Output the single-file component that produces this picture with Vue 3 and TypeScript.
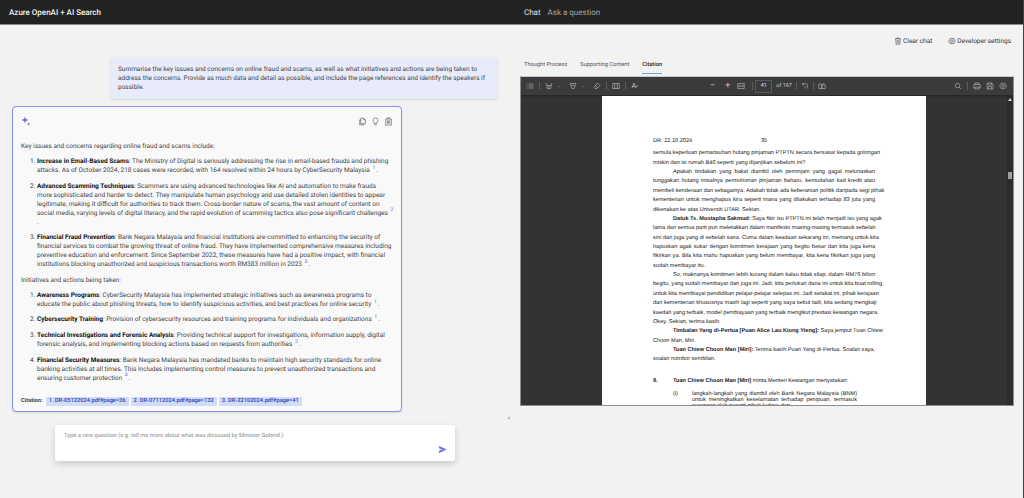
<template>
  <div class="page">
    <header class="topbar">
      <span class="brand">Azure OpenAI + AI Search</span>
      <nav class="topnav">
        <span class="on">Chat</span>
        <span>Ask a question</span>
      </nav>
    </header>

    <div class="commands">
      <span class="command">
        <svg viewBox="0 0 16 16" class="cmd-icon"><path d="M2 3.500h12M6 3.500V2h4v1.500M3.500 3.500l.8 11h7.400l.8-11M6.500 6v6.500M9.500 6v6.500" /></svg>
        Clear chat
      </span>
      <span class="command">
        <svg viewBox="0 0 16 16" class="cmd-icon"><circle cx="8" cy="8" r="2.500" /><path d="M8 1.500l1.500 1.800 2.300-.4.700 2.200 2 1.200-1 1.700 1 1.700-2 1.200-.7 2.200-2.300-.4L8 14.500l-1.500-1.800-2.300.4-.7-2.200-2-1.200 1-1.700-1-1.700 2-1.200.7-2.200 2.300.4z" /></svg>
        Developer settings
      </span>
    </div>

    <main class="split">
      <section class="chat">
        <div class="question">{{ question }}</div>

        <article class="answer">
          <div class="answer-head">
            <svg viewBox="0 0 20 20" class="sparkle">
              <path d="M8 1l1.800 5.200L15 8l-5.200 1.800L8 15l-1.800-5.200L1 8l5.200-1.800z" />
              <path d="M15.500 12.500l.9 2.600 2.600.9-2.600.9-.9 2.600-.9-2.600-2.600-.9 2.600-.9z" />
            </svg>
            <div class="answer-tools">
              <svg viewBox="0 0 16 16"><path d="M5 2h5l3 3v7H5zM10 2v3h3M5 5H3v9h7v-2" /></svg>
              <svg viewBox="0 0 16 16"><path d="M8 1.500a4.500 4.500 0 0 0-2.500 8.200V11.500h5V9.700A4.500 4.500 0 0 0 8 1.500zM6 14h4" /></svg>
              <svg viewBox="0 0 16 16"><path d="M3 3.500h10v11H3zM6 3.500V1.500h4v2M6 6v6M8 6v6M10 6v6" /></svg>
            </div>
          </div>

          <p class="para">Key issues and concerns regarding online fraud and scams include:</p>
          <ol class="points">
            <li v-for="item in issues" :key="item.title">
              <b>{{ item.title }}</b>{{ item.text }}<sup>{{ item.ref }}</sup>{{ item.tail }}
            </li>
          </ol>

          <p class="para second">Initiatives and actions being taken:</p>
          <ol class="points">
            <li v-for="item in initiatives" :key="item.title">
              <b>{{ item.title }}</b>{{ item.text }}<sup>{{ item.ref }}</sup>{{ item.tail }}
            </li>
          </ol>

          <div class="citations">
            <span class="cite-label">Citation:</span>
            <a v-for="c in citations" :key="c" class="chip">{{ c }}</a>
          </div>
        </article>

        <div class="ask">
          <span class="placeholder">Type a new question (e.g. tell me more about what was dicussed by Minister Gobind.)</span>
          <svg viewBox="0 0 16 16" class="send"><path d="M1 1.500L15.500 8 1 14.500l1.800-5.300L9 8 2.800 6.800z" /></svg>
        </div>
        <span class="grip"></span>
      </section>

      <section class="side">
        <div class="tabs">
          <span>Thought Process</span>
          <span>Supporting Content</span>
          <span class="tab-on">Citation</span>
        </div>

        <div class="viewer">
          <div class="toolbar">
            <div class="tool-group left">
              <svg viewBox="0 0 16 16"><path d="M5 4h10M5 8h10M5 12h10M1 4h2M1 8h2M1 12h2" /></svg>
              <i class="sep"></i>
              <svg viewBox="0 0 16 16"><path d="M2 2l3 11h6l3-11M4 7h8M8 7v6" /></svg>
              <em>⌄</em>
              <svg viewBox="0 0 16 16" class="gap"><path d="M2 3h12l-4 10H6zM5 7h6" /></svg>
              <em>⌄</em>
              <svg viewBox="0 0 16 16" class="gap"><path d="M9 2l5 5-6 6H4l-2-2zM5 7l5 5" /></svg>
              <i class="sep"></i>
              <svg viewBox="0 0 16 16"><path d="M1.500 3h13v10h-13zM5.500 3v10M10.500 3v10" /></svg>
              <i class="sep"></i>
              <span class="aa">A<small>ᴬ</small></span>
            </div>

            <div class="tool-group center">
              <span class="sym">−</span>
              <span class="sym">+</span>
              <svg viewBox="0 0 16 16"><path d="M1.500 3h13v10h-13zM4 8h8M4 6v4M12 6v4" /></svg>
              <i class="sep first"></i>
              <span class="page-box">41</span>
              <span class="of">of 167</span>
              <i class="sep"></i>
              <svg viewBox="0 0 16 16"><path d="M3 5a6 6 0 0 1 10.500 3 6 6 0 0 1-3 5M3 2v3h3M8 8v4" /></svg>
              <i class="sep"></i>
              <svg viewBox="0 0 16 16"><path d="M1.500 4h6v9h-6zM7.500 6h7v7h-7zM10 3h3" /></svg>
            </div>

            <div class="tool-group right">
              <svg viewBox="0 0 16 16"><circle cx="7" cy="7" r="4.500" /><path d="M10.500 10.500L14 14" /></svg>
              <i class="sep"></i>
              <svg viewBox="0 0 16 16"><path d="M4 5V2h8v3M4 12H1.500V5h13v7H12M4 10h8v4H4z" /></svg>
              <svg viewBox="0 0 16 16"><path d="M2 2h10l2 2v10H2zM5 2v4h6V2M5 14v-5h6v5" /></svg>
              <svg viewBox="0 0 16 16"><circle cx="8" cy="8" r="2.500" /><path d="M8 1.500l1.500 1.800 2.300-.4.700 2.200 2 1.200-1 1.700 1 1.700-2 1.200-.7 2.200-2.300-.4L8 14.500l-1.500-1.800-2.300.4-.7-2.200-2-1.200 1-1.700-1-1.700 2-1.200.7-2.200 2.300.4z" /></svg>
            </div>
          </div>

          <div class="viewer-body">
            <div class="pdf-page">
              <div class="pdf-head"><span>DR. 22.10.2024</span><span class="pdf-num">35</span></div>
              <p v-for="(l, i) in pdfLines" :key="i" class="pdf-line" :class="{ full: l.full, indent: l.indent }">
                <b v-if="l.bold">{{ l.bold }}</b> {{ l.text }}
              </p>
              <div class="pdf-item">
                <span class="pdf-no">9.</span>
                <span><b>Tuan Chiew Choon Man [Miri]</b> minta Menteri Kewangan menyatakan:</span>
              </div>
              <div class="pdf-sub">
                <span class="pdf-roman">(i)</span>
                <div>
                  <p class="pdf-line full">langkah-langkah yang diambil oleh Bank Negara Malaysia (BNM)</p>
                  <p class="pdf-line full">untuk meningkatkan keselamatan terhadap penipuan, termasuk</p>
                  <p class="pdf-line">serangan oleh peranti pihak ketiga; dan</p>
                </div>
              </div>
            </div>
            <div class="scroll">
              <span class="scroll-up"></span>
              <span class="scroll-thumb"></span>
            </div>
          </div>
        </div>
      </section>
    </main>
  </div>
</template>

<script setup lang="ts">
type Point = { title: string; text: string; ref: number; tail: string };
type PdfLine = { text: string; bold?: string; full?: boolean; indent?: boolean };

const question =
  "Summarise the key issues and concerns on online fraud and scams, as well as what initiatives and actions are being taken to\naddress the concerns. Provide as much data and detail as possible, and include the page references and identify the speakers if\npossible.";

const issues: Point[] = [
  {
    title: "Increase in Email-Based Scams",
    text: ": The Ministry of Digital is seriously addressing the rise in email-based frauds and phishing\nattacks. As of October 2024, 218 cases were recorded, with 164 resolved within 24 hours by CyberSecurity Malaysia ",
    ref: 1,
    tail: ".",
  },
  {
    title: "Advanced Scamming Techniques",
    text: ": Scammers are using advanced technologies like AI and automation to make frauds\nmore sophisticated and harder to detect. They manipulate human psychology and use detailed stolen identities to appear\nlegitimate, making it difficult for authorities to track them. Cross-border nature of scams, the vast amount of content on\nsocial media, varying levels of digital literacy, and the rapid evolution of scamming tactics also pose significant challenges ",
    ref: 2,
    tail: "\n.",
  },
  {
    title: "Financial Fraud Prevention",
    text: ": Bank Negara Malaysia and financial institutions are committed to enhancing the security of\nfinancial services to combat the growing threat of online fraud. They have implemented comprehensive measures including\npreventive education and enforcement. Since September 2022, these measures have had a positive impact, with financial\ninstitutions blocking unauthorized and suspicious transactions worth RM383 million in 2023 ",
    ref: 3,
    tail: ".",
  },
];

const initiatives: Point[] = [
  {
    title: "Awareness Programs",
    text: ": CyberSecurity Malaysia has implemented strategic initiatives such as awareness programs to\neducate the public about phishing threats, how to identify suspicious activities, and best practices for online security ",
    ref: 1,
    tail: ".",
  },
  {
    title: "Cybersecurity Training",
    text: ": Provision of cybersecurity resources and training programs for individuals and organizations ",
    ref: 1,
    tail: ".",
  },
  {
    title: "Technical Investigations and Forensic Analysis",
    text: ": Providing technical support for investigations, information supply, digital\nforensic analysis, and implementing blocking actions based on requests from authorities ",
    ref: 2,
    tail: ".",
  },
  {
    title: "Financial Security Measures",
    text: ": Bank Negara Malaysia has mandated banks to maintain high security standards for online\nbanking activities at all times. This includes implementing control measures to prevent unauthorized transactions and\nensuring customer protection ",
    ref: 3,
    tail: ".",
  },
];

const citations = ["1. DR-05122024.pdf#page=36", "2. DR-07112024.pdf#page=132", "3. DR-22102024.pdf#page=41"];

const pdfLines: PdfLine[] = [
  { text: "semula keperluan pemansuhan hutang pinjaman PTPTN secara bersasar kepada golongan", full: true },
  { text: "miskin dan isi rumah B40 seperti yang dijanjikan sebelum ini?" },
  { text: "Apakah tindakan yang bakal diambil oleh peminjam yang gagal melunaskan", full: true, indent: true },
  { text: "tunggakan hutang misalnya permohonan pinjaman baharu, kemudahan kad kredit atau", full: true },
  { text: "membeli kenderaan dan sebagainya. Adakah tidak ada keberanian politik daripada segi pihak", full: true },
  { text: "kementerian untuk menghapus kira seperti mana yang dilakukan terhadap 83 juta yang", full: true },
  { text: "dikenakan ke atas Universiti UTAR. Sekian." },
  { bold: "Datuk Ts. Mustapha Sakmud:", text: "Saya fikir isu PTPTN ini telah menjadi isu yang agak", full: true, indent: true },
  { text: "lama dan semua parti pun meletakkan dalam manifesto masing-masing termasuk sebelah", full: true },
  { text: "sini dan juga yang di sebelah sana. Cuma dalam keadaan sekarang ini, memang untuk kita", full: true },
  { text: "hapuskan agak sukar dengan komitmen kerajaan yang begitu besar dan kita juga kena", full: true },
  { text: "fikirkan ya. Bila kita mahu hapuskan yang belum membayar, kita kena fikirkan juga yang", full: true },
  { text: "sudah membayar itu." },
  { text: "So, maknanya komitmen lebih kurang dalam kalau tidak silap, dalam RM76 bilion", full: true, indent: true },
  { text: "begitu, yang sudah membayar dan juga ini. Jadi, kita perlukan dana ini untuk kita buat rolling,", full: true },
  { text: "untuk kita membiayai pendidikan pelajar-pelajar selepas ini. Jadi setakat ini, pihak kerajaan", full: true },
  { text: "dan kementerian khususnya masih lagi seperti yang saya sebut tadi, kita sedang mengkaji", full: true },
  { text: "kaedah yang terbaik, model pembiayaan yang terbaik mengikut prestasi kewangan negara.", full: true },
  { text: "Okey. Sekian, terima kasih." },
  { bold: "Timbalan Yang di-Pertua [Puan Alice Lau Kiong Yieng]:", text: "Saya jemput Tuan Chiew", full: true, indent: true },
  { text: "Choon Man, Miri." },
  { bold: "Tuan Chiew Choon Man [Miri]:", text: "Terima kasih Puan Yang di-Pertua. Soalan saya,", full: true, indent: true },
  { text: "soalan nombor sembilan." },
];
</script>

<style scoped>
.page {
  height: 498px;
  overflow: hidden;
  box-sizing: border-box;
  border-right: 1px solid #444;
  background: #f2f2f2;
  font-family: "Roboto", "Open Sans", sans-serif;
  color: #444;
  text-rendering: geometricPrecision;
}
.topbar {
  display: grid;
  grid-template-columns: 524px 1fr;
  align-items: center;
  height: 25px;
  box-sizing: border-box;
  padding-left: 9px;
  background: #222222;
  border-bottom: 1px solid #8c8c8c;
  color: #f3f3f3;
  font-size: 8px;
}
.brand {
  font-weight: 500;
}
.topnav {
  display: flex;
  gap: 7px;
  margin-left: -9px;
  color: #a8a8a8;
}
.topnav .on {
  color: #e2e2e2;
}
.commands {
  display: flex;
  justify-content: flex-end;
  gap: 16px;
  height: 32px;
  padding: 12px 12px 0 0;
  box-sizing: border-box;
  font-size: 6.500px;
  color: #333;
}
.command {
  display: flex;
  align-items: flex-start;
  gap: 1px;
  line-height: 9px;
}
.cmd-icon {
  width: 8px;
  height: 8px;
  fill: none;
  stroke: #333;
  stroke-width: 1.1;
}
.split {
  display: grid;
  grid-template-columns: 520px 494px;
}
.chat {
  display: flex;
  flex-direction: column;
  position: relative;
}
.question {
  align-self: flex-end;
  width: 388px;
  height: 42px;
  box-sizing: border-box;
  margin-right: 22px;
  padding: 8px 8px;
  background: #e8ebfa;
  border-radius: 3px;
  box-shadow: 0 1px 2px rgba(0, 0, 0, 0.12);
  font-size: 6.500px;
  line-height: 9px;
  white-space: pre;
}
.answer {
  width: 390px;
  height: 306px;
  box-sizing: border-box;
  margin: 7px 0 0 12px;
  padding: 9px 8px 0 8px;
  background: #f9f9f9;
  border: 1px solid #8b8fe6;
  border-radius: 4px;
  box-shadow: 0 1px 2px rgba(0, 0, 0, 0.1);
  font-size: 6.500px;
  line-height: 9px;
}
.answer-head {
  display: flex;
  justify-content: space-between;
  height: 26px;
}
.sparkle {
  width: 10px;
  height: 10px;
  fill: #6a6fe0;
}
.answer-tools {
  display: flex;
  gap: 4px;
  margin-top: 1px;
  height: 9px;
}
.answer-tools svg {
  width: 9px;
  height: 9px;
  fill: none;
  stroke: #555;
  stroke-width: 1.1;
}
.para {
  margin: 0;
  height: 15px;
}
.para.second {
  margin-top: 1px;
}
.points {
  margin: 0;
  padding: 0 0 0 16px;
  white-space: pre;
}
.points li {
  margin-bottom: 6.600px;
}
.points b {
  color: #111;
  font-weight: 700;
}
sup {
  font-size: 5px;
  line-height: 0;
  color: #4a5bd4;
  margin: 0 1px;
}
.citations {
  display: flex;
  align-items: center;
  gap: 2px;
  margin-top: 14px;
  font-size: 5.700px;
}
.cite-label {
  font-weight: 700;
  margin-right: 1px;
}
.chip {
  padding: 0 3px;
  height: 9px;
  line-height: 9px;
  background: #d1dbfa;
  color: #2f43b0;
  border-radius: 1px;
  font-weight: 500;
}
.ask {
  position: relative;
  width: 400px;
  height: 36px;
  box-sizing: border-box;
  margin: 13px 0 0 55px;
  padding: 7px 9px;
  background: #fff;
  border-radius: 3px;
  box-shadow: 0 3px 7px rgba(0, 0, 0, 0.16);
  font-size: 5.800px;
  line-height: 9px;
  color: #8a8a8a;
}
.send {
  position: absolute;
  right: 8px;
  bottom: 7px;
  width: 9px;
  height: 9px;
  fill: #6f74e0;
}
.grip {
  position: absolute;
  left: 507px;
  top: 359px;
  width: 0;
  height: 0;
  border-left: 3px solid transparent;
  border-bottom: 3px solid #b5b5b5;
}
.side {
  display: flex;
  flex-direction: column;
  margin-top: -1px;
}
.tabs {
  display: flex;
  gap: 13px;
  height: 20px;
  padding: 5px 0 0 4px;
  box-sizing: border-box;
  font-size: 5.700px;
  line-height: 9px;
  color: #555;
}
.tab-on {
  height: 12px;
  color: #222;
  font-weight: 500;
  border-bottom: 1px solid #6fa3e4;
}
.viewer {
  height: 330px;
  box-sizing: border-box;
  border: 1px solid #8e8e8e;
  border-top-color: #c9c9c9;
  background: #333;
  overflow: hidden;
}
.toolbar {
  display: grid;
  grid-template-columns: 181px 1fr auto;
  align-items: center;
  height: 18px;
  background: #3b3b3b;
  padding: 0 6px 0 5px;
  box-shadow: 0 1px 2px rgba(0, 0, 0, 0.35);
  color: #c8c8c8;
  font-size: 6px;
}
.toolbar svg {
  width: 8px;
  height: 8px;
  fill: none;
  stroke: #c8c8c8;
  stroke-width: 1.1;
  flex: none;
}
.tool-group {
  display: flex;
  align-items: center;
  gap: 5px;
}
.tool-group.center {
  gap: 4px;
}
.tool-group em {
  font-style: normal;
  font-size: 5px;
  color: #8f8f8f;
  margin-left: -1px;
}
.tool-group .gap {
  margin-left: 3px;
}
.sep {
  width: 1px;
  height: 8px;
  background: #5c5c5c;
}
.sep.first {
  margin: 0 -2px 0 3px;
}
.aa {
  font-size: 7px;
}
.aa small {
  font-size: 4px;
}
.sym {
  font-size: 9px;
  line-height: 9px;
  margin: 0 3px;
}
.page-box {
  width: 17px;
  height: 13px;
  line-height: 11px;
  text-align: center;
  border: 1px solid #5a5a5a;
  box-sizing: border-box;
  font-size: 5.500px;
  color: #e0e0e0;
}
.of {
  font-size: 5.500px;
}
.viewer-body {
  position: relative;
  display: flex;
  justify-content: center;
  height: 311px;
  padding: 1px 6px 0 0;
  box-sizing: border-box;
}
.pdf-page {
  width: 324px;
  height: 420px;
  flex: none;
  box-sizing: border-box;
  padding: 41px 51px 0;
  background: #fff;
  color: #222;
  font-family: "Liberation Sans", Arial, sans-serif;
  font-size: 5.600px;
  line-height: 9.360px;
}
.pdf-head {
  position: relative;
  height: 12.400px;
}
.pdf-num {
  position: absolute;
  left: 108px;
}
.pdf-line {
  margin: 0;
  white-space: nowrap;
}
.pdf-line.full {
  text-align: justify;
  text-align-last: justify;
}
.pdf-line.indent {
  padding-left: 20px;
}
.pdf-item {
  display: flex;
  margin-top: 12.700px;
  margin-bottom: 4px;
}
.pdf-no {
  width: 20px;
  font-weight: 700;
}
.pdf-sub {
  display: flex;
  padding-left: 20px;
  line-height: 6.200px;
}
.pdf-roman {
  width: 19px;
}
.pdf-sub > div {
  width: 165px;
}
.scroll {
  position: absolute;
  top: 0;
  right: 0;
  width: 6px;
  height: 100%;
  background: #2b2b2b;
}
.scroll-up {
  display: block;
  width: 0;
  height: 0;
  margin: 3px auto 0;
  border: 2px solid transparent;
  border-top: 0;
  border-bottom: 3px solid #cfcfcf;
}
.scroll-thumb {
  position: absolute;
  top: 77px;
  left: 1px;
  width: 4px;
  height: 7px;
  background: #9f9f9f;
}
</style>

<style>
body {
  margin: 0;
}
</style>
